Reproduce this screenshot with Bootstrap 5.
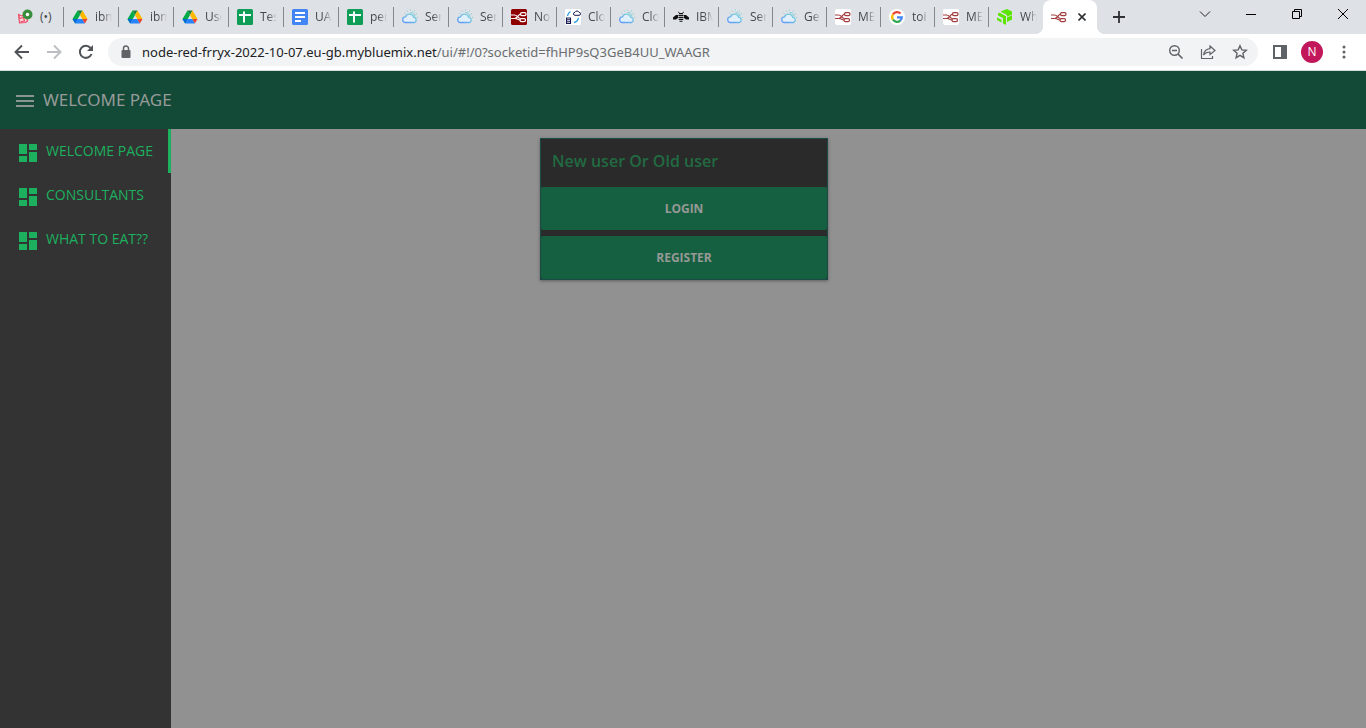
<!DOCTYPE html>
<html lang="en">
<head>
<meta charset="utf-8">
<meta name="viewport" content="width=device-width, initial-scale=1">
<title>WELCOME PAGE</title>
<link rel="stylesheet" href="https://cdn.jsdelivr.net/npm/bootstrap@5.3.0/dist/css/bootstrap.min.css">
<style>
body { font-family: "Open Sans", "Noto Sans", sans-serif; font-size: 13px; line-height: 20px; background: #919191; }
svg { display: block; flex-shrink: 0; }
button { border: 0; background: none; padding: 0; }
/* browser frame */
.tabstrip { height: 34px; background: #dee1e6; color: #45494d; font-size: 12px; }
.tabset { min-width: 0; margin-left: 9px; }
.tab { flex: 0 1 54px; min-width: 0; height: 34px; padding-left: 8px; position: relative; color: inherit; text-decoration: none; }
.tab:nth-child(-n+8) { flex-basis: 55px; }
.tab.sep::after { content: ""; position: absolute; right: 0; top: 7px; width: 1px; height: 20px; background: #84878b; }
.tab-name { width: 24px; margin-left: 7px; white-space: nowrap; -webkit-mask-image: linear-gradient(90deg, #000 8px, transparent 17px); mask-image: linear-gradient(90deg, #000 8px, transparent 17px); }
.tab-name.whole { -webkit-mask-image: none; mask-image: none; }
.tab.current { background: #fff; border-radius: 8px 8px 0 0; }
.tab.current::before, .tab.current::after { content: ""; position: absolute; bottom: 0; width: 8px; height: 8px; }
.tab.current::before { left: -8px; background: radial-gradient(circle at 0 0, transparent 8px, #fff 8px); }
.tab.current::after { right: -8px; background: radial-gradient(circle at 100% 0, transparent 8px, #fff 8px); }
.tab-close { margin-left: 11px; }
.caption-btn { width: 46px; height: 28px; }
.tool-btn { width: 32px; height: 28px; }
.addressbar { height: 37px; background: #fff; border-bottom: 1px solid #d5dcd9; padding: 0 6px 0 12px; }
.omnibox { height: 28px; border-radius: 14px; background: #f1f3f4; padding: 0 10px; margin: 0 6px 0 12px; }
.url { font-family: "Noto Sans", sans-serif; font-size: 13px; color: #6a6d70; margin-left: 8px; }
.url b { font-weight: 400; color: #202124; }
.avatar { width: 22px; height: 22px; background: #c2185b; color: #fff; font-size: 12px; }
/* dashboard */
.topbar { height: 58px; background: #124a37; color: #979a99; padding-left: 13px; }
.topbar h1 { font-family: "Noto Sans", sans-serif; font-size: 17px; line-height: 24px; font-weight: 400; margin: 0 0 0 6px; }
.sidebar { width: 171px; background: #333; }
.sidebar a { height: 44px; padding: 3px 0 0 16px; color: #1cb05f; font-size: 14px; text-decoration: none; border-right: 3px solid transparent; white-space: nowrap; }
.sidebar a.active { border-color: #1cb05f; }
.sidebar span { margin-left: 6px; padding-bottom: 4px; }
.panel { width: 288px; margin: 9px 169px 0 0; background: #2a2a2a; border: 1px solid #1b4a47; box-shadow: 0 1px 3px rgba(0,0,0,.35); }
.panel h2 { margin: 0; padding: 10px 11px 14px; font-size: 16px; line-height: 24px; font-weight: 600; color: #216b42; }
.action { height: 43px; background: #166042; color: #969996; font-size: 12px; font-weight: 700; border-radius: 2px; }
.action + .action { margin-top: 6px; }
</style>
<script src="https://cdn.jsdelivr.net/npm/bootstrap@5.3.0/dist/js/bootstrap.bundle.min.js"></script>
</head>
<body class="d-flex flex-column min-vh-100">
<svg class="position-absolute" width="0" height="0" aria-hidden="true">
  <defs><linearGradient id="sky" x1="0" y1="1" x2="1" y2="0"><stop stop-color="#5c94f8"/><stop offset="1" stop-color="#7fdcd8"/></linearGradient></defs>
  <symbol id="meet" viewBox="0 0 16 16"><path d="M1.500 5.500l3 1.500 5-2 1 7-2 1.500-6 .5zM1.500 5.500l1 4M2.500 9.500l4-1 1 3.500-4 .7" fill="#f8d3d9" stroke="#ee4965" stroke-width="1.100"/><circle cx="10.500" cy="5.500" r="5" fill="#388e3c"/><circle cx="10.500" cy="5.500" r="1.700" fill="#fff"/></symbol>
  <symbol id="drive" viewBox="0 0 16 16"><path d="M5.500 1.500h5L8 6z" fill="#188038"/><path d="M5.500 1.500L8 6l-4.800 8.500L.5 10z" fill="#00ac47"/><path d="M10.500 1.500L15.500 10h-5.200L8 6z" fill="#ffba00"/><path d="M.5 10h5.300l-2.600 4.500z" fill="#0066da"/><path d="M5.800 10h4.500l2.600 4.500H3.200z" fill="#2684fc"/><path d="M10.300 10h5.200l-2.600 4.500z" fill="#ea4335"/></symbol>
  <symbol id="sheet" viewBox="0 0 16 16"><rect width="16" height="16" rx="1.500" fill="#0f9d58"/><path d="M2 6h12M7 2.500v11" stroke="#fff" stroke-width="2"/></symbol>
  <symbol id="docs" viewBox="0 0 16 16"><rect width="16" height="16" rx="1.500" fill="#4285f4"/><path d="M3 4h10M3 8h10M3 12h6" stroke="#fff" stroke-width="1.800"/></symbol>
  <symbol id="cloud" viewBox="0 0 16 16"><path d="M3.500 13.500a2.800 2.800 0 0 1 0-5.600 4.400 4.400 0 0 1 8.300.4 2.700 2.700 0 0 1 .7 5.200z" fill="#e1effa" stroke="url(#sky)" stroke-width="1.300"/><path d="M8.500 3.500a4 4 0 0 1 4.500 4M8.500.5v1M12.500 1.500l-.7 1.200M15 4.500l-1.200.7M15 8.500h1M5 1.500l.7 1M2.500 4l1 .8" fill="none" stroke="#83cfd9"/></symbol>
  <symbol id="flow" viewBox="0 0 16 16"><path d="M0 9.500h3.500C7 9.500 7 5 10 5M4 9.500c3 0 2.500 1.500 5 1.500M0 6h3.500c3 0 3 3 6 3.500" fill="none" stroke="currentColor" stroke-width="1.200"/><rect x="9.500" y="3.600" width="5.500" height="3" rx="1.400" fill="none" stroke="currentColor" stroke-width="1.200"/><rect x="9" y="9.600" width="5.500" height="3" rx="1.400" fill="none" stroke="currentColor" stroke-width="1.200"/></symbol>
  <symbol id="sync" viewBox="0 0 16 16"><rect width="16" height="16" rx="1.500" fill="#fff"/><path d="M2.500 7A6 6 0 0 1 5.500 2.500M13.500 9A6 6 0 0 1 9 13.500" fill="none" stroke="#2b9de0" stroke-width="1.300"/><path d="M10 6.300a1.500 1.500 0 0 1 0-3 2.200 2.200 0 0 1 4 0 1.500 1.500 0 0 1 0 3z" fill="#fff" stroke="#15194f"/><path d="M1.500 9h4v5.500h-4zM1.500 10.800h4M1.500 12.700h4" fill="#fff" stroke="#15194f" stroke-width="1.100"/></symbol>
  <symbol id="bee" viewBox="0 0 16 16"><path d="M6 4h4v1H6zM5.500 5.800h5v1.200h-5zM5.500 7.800h5V9h-5zM5.700 9.800h4.600v1.200H5.700zM6.500 11.800h3v1h-3zM5 6L3 6 0 8.500v2h3L5 9zM11 6h2l3 2.500v2h-3L11 9z" fill="#111"/><path d="M5 3l1.500.8M11 3l-1.500.8" stroke="#111" stroke-width=".8"/></symbol>
  <symbol id="google" viewBox="0 0 16 16"><circle cx="8" cy="8" r="8" fill="#fff"/><g fill="none" stroke-width="2.300"><path d="M4 5.300A4.900 4.900 0 0 1 11.500 4.500" stroke="#ea4335"/><path d="M4 5.300a4.900 4.900 0 0 0 0 5.400" stroke="#fbbc05"/><path d="M4 10.700a4.900 4.900 0 0 0 7.300.9" stroke="#34a853"/><path d="M11.300 11.600a4.900 4.900 0 0 0 1.500-3.300H8" stroke="#4285f4"/></g></symbol>
  <symbol id="cube" viewBox="0 0 16 16"><path d="M3.500 2.500L10 0l5 2.500v8L10 13V6zM1 4.500l2-1L9 7v9l-3-1.500V9L1 6.500zM0 8.500l4.500 2.300v2.700L0 11z" fill="#5ce500"/><path d="M2.500 3.200l7 3.600V16M10 8l5-2" fill="none" stroke="#dee1e6" stroke-width=".8"/></symbol>
  <symbol id="dash" viewBox="0 0 24 24"><path d="M3 13h8V3H3v10zm0 8h8v-6H3v6zm10 0h8V11h-8v10zm0-18v6h8V3h-8z" fill="currentColor"/></symbol>
</svg>

<header>
  <div class="tabstrip d-flex align-items-center">
    <nav class="tabset d-flex flex-grow-1" aria-label="Tabs">
      <a href="#" class="tab sep d-flex align-items-center"><svg width="16" height="16"><use href="#meet"/></svg><span class="tab-name whole">(•)</span></a>
      <a href="#" class="tab sep d-flex align-items-center"><svg width="16" height="16"><use href="#drive"/></svg><span class="tab-name">ibm</span></a>
      <a href="#" class="tab sep d-flex align-items-center"><svg width="16" height="16"><use href="#drive"/></svg><span class="tab-name">ibm</span></a>
      <a href="#" class="tab sep d-flex align-items-center"><svg width="16" height="16"><use href="#drive"/></svg><span class="tab-name">Use</span></a>
      <a href="#" class="tab sep d-flex align-items-center"><svg width="16" height="16"><use href="#sheet"/></svg><span class="tab-name">Tes</span></a>
      <a href="#" class="tab sep d-flex align-items-center"><svg width="16" height="16"><use href="#docs"/></svg><span class="tab-name">UA</span></a>
      <a href="#" class="tab sep d-flex align-items-center"><svg width="16" height="16"><use href="#sheet"/></svg><span class="tab-name">per</span></a>
      <a href="#" class="tab sep d-flex align-items-center"><svg width="16" height="16"><use href="#cloud"/></svg><span class="tab-name">Ser</span></a>
      <a href="#" class="tab sep d-flex align-items-center"><svg width="16" height="16"><use href="#cloud"/></svg><span class="tab-name">Ser</span></a>
      <a href="#" class="tab sep d-flex align-items-center"><svg width="16" height="16" color="#fff"><rect width="16" height="16" rx="1.500" fill="#8f0000"/><use href="#flow"/></svg><span class="tab-name">No</span></a>
      <a href="#" class="tab sep d-flex align-items-center"><svg width="16" height="16"><use href="#sync"/></svg><span class="tab-name">Clo</span></a>
      <a href="#" class="tab sep d-flex align-items-center"><svg width="16" height="16"><use href="#cloud"/></svg><span class="tab-name">Clo</span></a>
      <a href="#" class="tab sep d-flex align-items-center"><svg width="16" height="16"><use href="#bee"/></svg><span class="tab-name">IBM</span></a>
      <a href="#" class="tab sep d-flex align-items-center"><svg width="16" height="16"><use href="#cloud"/></svg><span class="tab-name">Ser</span></a>
      <a href="#" class="tab sep d-flex align-items-center"><svg width="16" height="16"><use href="#cloud"/></svg><span class="tab-name">Ge</span></a>
      <a href="#" class="tab sep d-flex align-items-center"><svg width="16" height="16" color="#a33c3e"><rect width="16" height="16" rx="2" fill="#fff"/><use href="#flow"/></svg><span class="tab-name">ME</span></a>
      <a href="#" class="tab sep d-flex align-items-center"><svg width="16" height="16"><use href="#google"/></svg><span class="tab-name">toi</span></a>
      <a href="#" class="tab sep d-flex align-items-center"><svg width="16" height="16" color="#a33c3e"><rect width="16" height="16" rx="2" fill="#fff"/><use href="#flow"/></svg><span class="tab-name">ME</span></a>
      <a href="#" class="tab d-flex align-items-center"><svg width="16" height="16"><use href="#cube"/></svg><span class="tab-name">Wh</span></a>
      <div class="tab current d-flex align-items-center"><svg width="16" height="16" color="#a33c3e"><use href="#flow"/></svg>
        <button class="tab-close" aria-label="Close tab"><svg width="8" height="8" viewBox="0 0 8 8"><path d="M.5.5l7 7m0-7l-7 7" stroke="#2f3235" stroke-width="1.600"/></svg></button></div>
      <button class="ms-3" aria-label="New tab"><svg width="12" height="12" viewBox="0 0 12 12"><path d="M6 0v12M0 6h12" stroke="#303134" stroke-width="1.800"/></svg></button>
    </nav>
    <div class="d-flex flex-shrink-0 align-self-start">
      <button class="caption-btn d-flex align-items-center justify-content-center" aria-label="Search tabs"><svg width="12" height="12" viewBox="0 0 12 12"><path d="M1 3.500l5 5 5-5" fill="none" stroke="#222"/></svg></button>
      <button class="caption-btn d-flex align-items-center justify-content-center" aria-label="Minimize"><svg width="12" height="12" viewBox="0 0 12 12"><path d="M1 6.500h10" stroke="#000"/></svg></button>
      <button class="caption-btn d-flex align-items-center justify-content-center" aria-label="Restore"><svg width="12" height="12" viewBox="0 0 12 12"><path d="M1.500 3.500h7v7h-7zM3.500 3V1.500h7v7H9" fill="none" stroke="#000"/></svg></button>
      <button class="caption-btn d-flex align-items-center justify-content-center" aria-label="Close"><svg width="12" height="12" viewBox="0 0 12 12"><path d="M1 1l10 10M11 1L1 11" stroke="#000"/></svg></button>
    </div>
  </div>
  <div class="addressbar d-flex align-items-center">
    <div class="d-flex gap-2 align-items-center">
      <button aria-label="Back"><svg width="20" height="20" viewBox="0 0 20 20"><path d="M17 10H4M10 3.500L3.500 10l6.500 6.500" fill="none" stroke="#505357" stroke-width="1.900"/></svg></button>
      <button class="ms-1" aria-label="Forward"><svg width="20" height="20" viewBox="0 0 20 20"><path d="M3 10h13M10 3.500l6.500 6.500-6.500 6.500" fill="none" stroke="#bcbec1" stroke-width="1.900"/></svg></button>
      <button class="ms-1" aria-label="Reload"><svg width="20" height="20" viewBox="0 0 20 20"><path d="M15.500 12A6 6 0 1 1 14.500 6" fill="none" stroke="#505357" stroke-width="2"/><path d="M17 3v6h-6z" fill="#505357"/></svg></button>
    </div>
    <div class="omnibox flex-grow-1 d-flex align-items-center">
      <svg width="16" height="16" viewBox="0 0 16 16"><rect x="3.500" y="6" width="9" height="8" rx="1" fill="#5f6368"/><path d="M5.500 6V4.500a2.500 2.500 0 0 1 5 0V6" fill="none" stroke="#5f6368" stroke-width="1.500"/></svg>
      <span class="url text-nowrap"><b>node-red-frryx-2022-10-07.eu-gb.mybluemix.net</b>/ui/#!/0?socketid=fhHP9sQ3GeB4UU_WAAGR</span>
      <div class="d-flex gap-3 ms-auto">
        <button aria-label="Zoom out"><svg width="16" height="16" viewBox="0 0 16 16"><path d="M10 10l4.500 4.500M4 6.500h5" stroke="#5f6368" stroke-width="1.700"/><circle cx="6.500" cy="6.500" r="4.800" fill="none" stroke="#5f6368" stroke-width="1.400"/></svg></button>
        <button aria-label="Share"><svg width="16" height="16" viewBox="0 0 16 16"><path d="M1.500 5v9.500h11V12" fill="none" stroke="#5f6368" stroke-width="1.200"/><path d="M10 2l5 4.500-5 4V8C7 8 5 9 3.500 11 4 7.500 6 5 10 4.600z" fill="none" stroke="#5f6368" stroke-width="1.200"/></svg></button>
        <button aria-label="Bookmark"><svg width="16" height="16" viewBox="0 0 16 16"><path d="M8 1.800l1.800 4.100 4.500.4-3.400 3 1 4.400L8 11.400l-3.900 2.300 1-4.400-3.400-3 4.500-.4z" fill="none" stroke="#5f6368" stroke-width="1.400"/></svg></button>
      </div>
    </div>
    <div class="d-flex align-items-center">
      <button class="tool-btn d-flex align-items-center justify-content-center" aria-label="Side panel"><svg width="14" height="14" viewBox="0 0 14 14"><path d="M1 1h12v12H1z" fill="none" stroke="#5f6368" stroke-width="2"/><path d="M8 1h5v12H8z" fill="#5f6368"/></svg></button>
      <button class="tool-btn d-flex align-items-center justify-content-center" aria-label="Profile"><span class="avatar rounded-circle d-flex align-items-center justify-content-center">N</span></button>
      <button class="tool-btn d-flex align-items-center justify-content-center" aria-label="Menu"><svg width="4" height="14" viewBox="0 0 4 14"><path d="M2 2h.01M2 7h.01M2 12h.01" stroke="#5f6368" stroke-width="3" stroke-linecap="round"/></svg></button>
    </div>
  </div>
</header>

<div class="topbar d-flex align-items-center">
  <button aria-label="Toggle menu"><svg width="24" height="24" viewBox="0 0 24 24"><path d="M3 8h18M3 13h18M3 18h18" stroke="#8b9490" stroke-width="2"/></svg></button>
  <h1>WELCOME PAGE</h1>
</div>
<div class="d-flex flex-grow-1">
  <nav class="sidebar flex-shrink-0 d-flex flex-column" aria-label="Pages">
    <a href="#" class="active d-flex align-items-center"><svg width="24" height="24"><use href="#dash"/></svg><span>WELCOME PAGE</span></a>
    <a href="#" class="d-flex align-items-center"><svg width="24" height="24"><use href="#dash"/></svg><span>CONSULTANTS</span></a>
    <a href="#" class="d-flex align-items-center"><svg width="24" height="24"><use href="#dash"/></svg><span>WHAT TO EAT??</span></a>
  </nav>
  <main class="flex-grow-1 d-flex justify-content-center align-items-start">
    <section class="panel d-flex flex-column">
      <h2>New user Or Old user</h2>
      <button class="action w-100">LOGIN</button>
      <button class="action w-100">REGISTER</button>
    </section>
  </main>
</div>
</body>
</html>
